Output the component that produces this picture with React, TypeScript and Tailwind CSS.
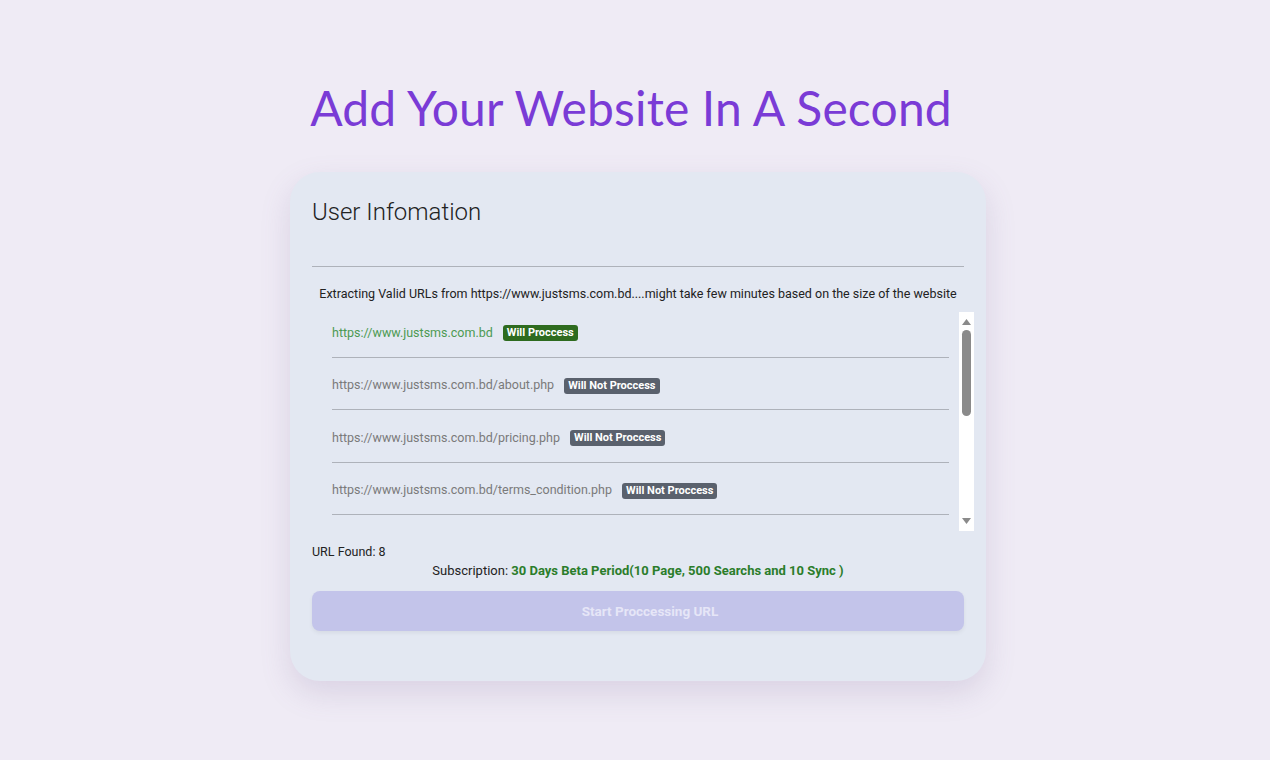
import { useState } from "react"

type UrlRow = { url: string; ok: boolean }

const rows: UrlRow[] = [
  { url: "https://www.justsms.com.bd", ok: true },
  { url: "https://www.justsms.com.bd/about.php", ok: false },
  { url: "https://www.justsms.com.bd/pricing.php", ok: false },
  { url: "https://www.justsms.com.bd/terms_condition.php", ok: false },
]

export default function App() {
  const [urls] = useState(rows)
  const found = 8

  return (
    <div className="min-h-screen bg-[#efebf5] font-['Roboto',sans-serif] text-[#222]">
      <main className="flex flex-col items-center pt-[78px]">
        {/* Page heading */}
        <h1 className="mr-[8px] font-['Lato',sans-serif] text-[48px] font-normal leading-[60px] tracking-[0.15px] text-[#7a3bd6]">
          Add Your Website In A Second
        </h1>

        {/* Card */}
        <div className="ml-[6px] mt-[34px] w-[696px] rounded-[30px] bg-[#e3e8f2] px-[22px] pb-[50px] pt-[24px] shadow-[0_12px_30px_rgba(120,100,150,0.18)]">
          <h2 className="text-[24px] font-light leading-[32px] text-[#222]">User Infomation</h2>

          <div className="mt-[38px] border-t border-[#aeb2ba]" />

          <p className="mt-[18px] text-center text-[12.5px] leading-[18px] text-[#222]">
            Extracting Valid URLs from https://www.justsms.com.bd....might take few minutes based on the size of the website
          </p>

          {/* URL list with scrollbar */}
          <div className="-mr-[10px] mt-[9px] flex h-[219px]">
            <div className="flex-1 overflow-hidden pl-[20px] pr-[10px]">
              <div className="-mt-[7px]">
                {urls.map((r) => (
                  <div key={r.url} className="flex h-[52.5px] items-center gap-[10px] border-b border-[#aeb2ba] pt-[5px]">
                    <span className={`text-[12.5px] ${r.ok ? "text-[#4c9a52]" : "text-[#7a7a7a]"}`}>{r.url}</span>
                    <span
                      className={`rounded-[3px] px-[4px] py-[1px] text-[11px] font-bold leading-[14px] text-white ${
                        r.ok ? "bg-[#2e6b1f]" : "bg-[#5a616d]"
                      }`}
                    >
                      {r.ok ? "Will Proccess" : "Will Not Proccess"}
                    </span>
                  </div>
                ))}
              </div>
            </div>
            <div className="flex w-[15px] flex-col items-center bg-white py-[4px]">
              <svg width="9" height="6" viewBox="0 0 9 6" className="mt-[3px]">
                <path d="M4.5 0L9 6H0z" fill="#8a8a8a" />
              </svg>
              <div className="mt-[5px] h-[86px] w-[9px] rounded-full bg-[#8a8a8a]" />
              <div className="flex-1" />
              <svg width="9" height="6" viewBox="0 0 9 6" className="mb-[3px]">
                <path d="M0 0H9L4.5 6z" fill="#8a8a8a" />
              </svg>
            </div>
          </div>

          <p className="mt-[12px] text-[12.5px] leading-[18px]">URL Found: {found}</p>
          <p className="mt-[1px] text-center text-[13px] leading-[18px]">
            Subscription:{" "}
            <span className="font-bold text-[#2b7d2b]">30 Days Beta Period(10 Page, 500 Searchs and 10 Sync )</span>
          </p>

          <button
            disabled
            className="mt-[11px] h-[40px] w-full rounded-[8px] bg-[#c3c4ea] pl-[24px] text-[13.5px] font-bold text-[#e6e6f7] shadow-[0_2px_4px_rgba(0,0,0,0.06)]"
          >
            Start Proccessing URL
          </button>
        </div>
      </main>
    </div>
  )
}
